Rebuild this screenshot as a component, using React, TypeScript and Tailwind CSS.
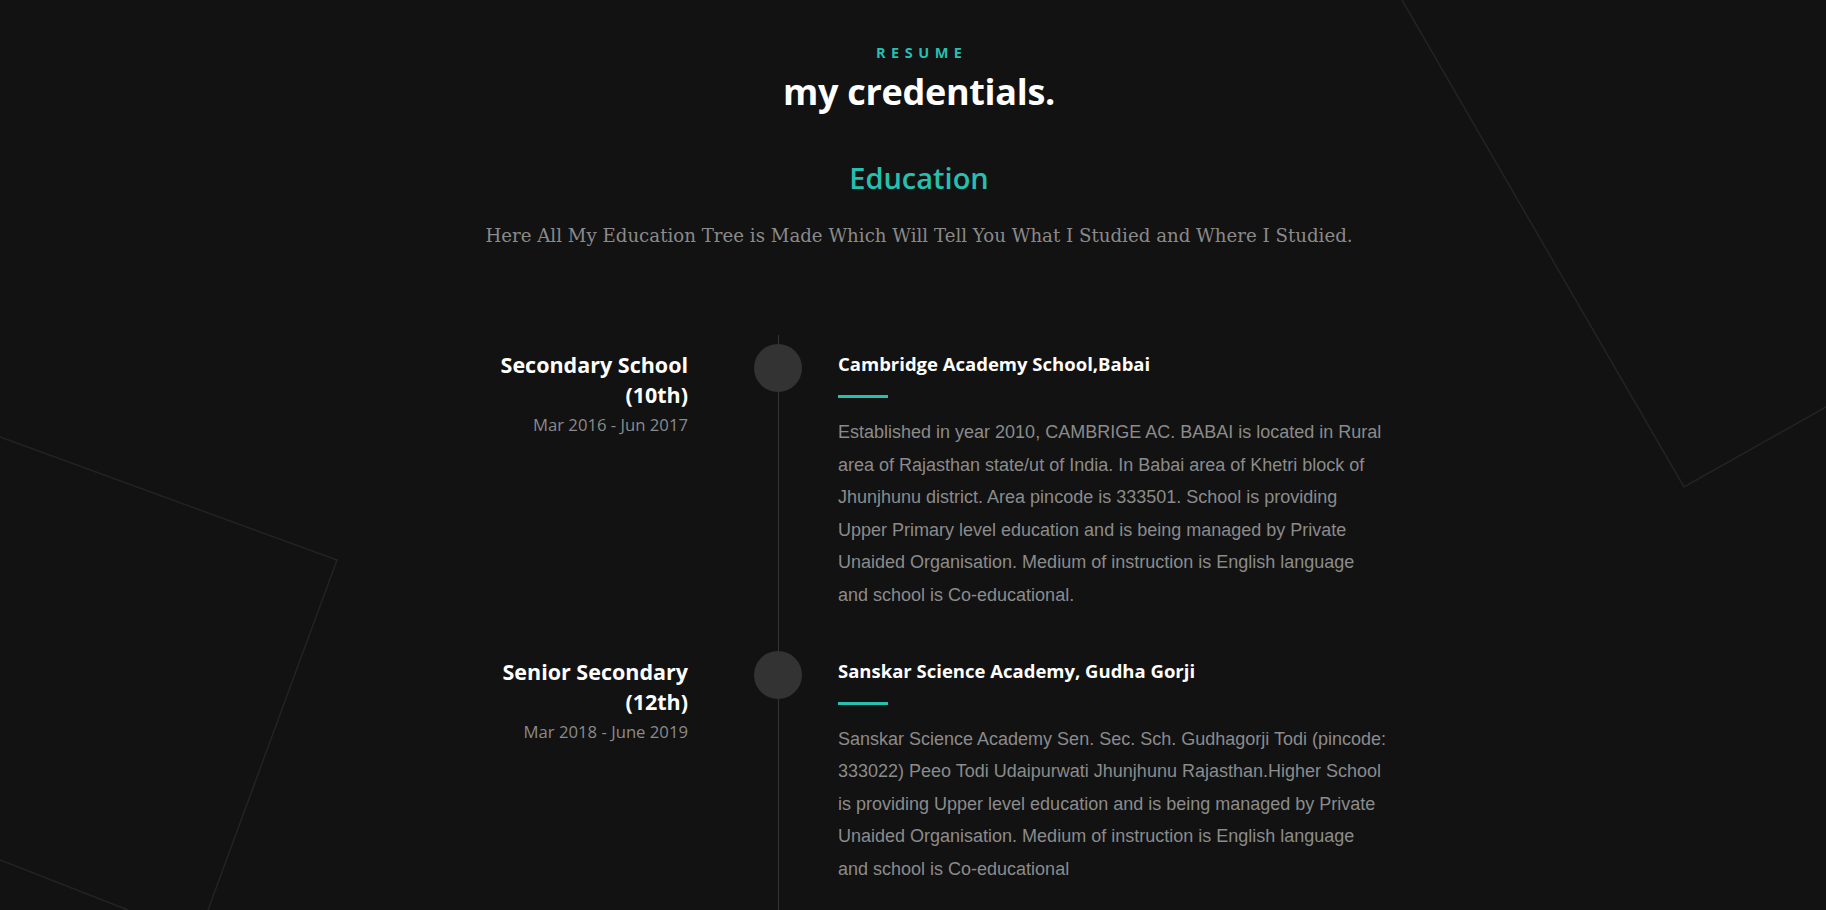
import React from "react";

const items = [
  {
    title: "Secondary School (10th)",
    date: "Mar 2016 - Jun 2017",
    school: "Cambridge Academy School,Babai",
    text:
      "Established in year 2010, CAMBRIGE AC. BABAI is located in Rural area of Rajasthan state/ut of India. In Babai area of Khetri block of Jhunjhunu district. Area pincode is 333501. School is providing Upper Primary level education and is being managed by Private Unaided Organisation. Medium of instruction is English language and school is Co-educational.",
  },
  {
    title: "Senior Secondary (12th)",
    date: "Mar 2018 - June 2019",
    school: "Sanskar Science Academy, Gudha Gorji",
    text:
      "Sanskar Science Academy Sen. Sec. Sch. Gudhagorji Todi (pincode: 333022) Peeo Todi Udaipurwati Jhunjhunu Rajasthan.Higher School is providing Upper level education and is being managed by Private Unaided Organisation. Medium of instruction is English language and school is Co-educational",
  },
];

const heading = { fontFamily: '"Open Sans", "Noto Sans", sans-serif' };

export default function App() {
  return (
    <div className="relative w-full h-[910px] overflow-hidden bg-[#121212]">
      <svg
        className="absolute inset-0 pointer-events-none"
        width="1826"
        height="910"
        viewBox="0 0 1826 910"
        fill="none"
      >
        <polyline points="1402,0 1684,487 1826,407" stroke="#232323" strokeWidth="1.5" />
        <polyline points="0,437 337,560 208,910" stroke="#232323" strokeWidth="1.5" />
        <polyline points="0,860 128,910" stroke="#232323" strokeWidth="1.5" />
      </svg>

      <div className="relative flex flex-col items-center pt-[42.5px]">
        <div className="flex flex-col items-center pl-[12px]">
          <p
            className="text-[14.5px] leading-[20px] font-bold tracking-[5.5px] pl-[5.5px] text-[#26bfb0]"
            style={heading}
          >
            RESUME
          </p>
          <h2
            className="mt-[6px] text-[36px] leading-[45px] font-bold text-white tracking-[-0.3px]"
            style={heading}
          >
            my credentials.
          </h2>
          <h3
            className="mt-[47px] text-[29px] leading-[1.2] font-semibold text-[#26bfb0]"
            style={heading}
          >
            Education
          </h3>
          <p
            className="mt-[27px] text-[18.2px] leading-[28px] text-[#8a8a8a]"
            style={{ fontFamily: '"DejaVu Serif", "Liberation Serif", serif' }}
          >
            Here All My Education Tree is Made Which Will Tell You What I Studied and Where I Studied.
          </p>
        </div>

        <div className="mt-[85px] w-[1050px] pl-[100px] flex flex-col">
          {items.map((it, i) => (
            <div key={i} className="flex">
              <div className="w-[200px] text-right pt-[15px]">
                <h4
                  className="text-[21.5px] leading-[30px] font-bold text-white"
                  style={heading}
                >
                  {it.title}
                </h4>
                <p
                  className="mt-[3px] text-[16.7px] leading-[24px] text-[#8a8a8a]"
                  style={heading}
                >
                  {it.date}
                </p>
              </div>
              <div className="w-[150px] shrink-0 bg-[linear-gradient(#333333,#333333)] bg-no-repeat bg-[length:1px_100%] bg-[position:89.5px_0]">
                <div className="mt-[9px] ml-[66px] w-[48px] h-[48px] rounded-full bg-[#333333]" />
              </div>
              <div className={"w-[548px] pt-[16px] " + (i === 0 ? "pb-[30.5px]" : "pb-[40px]")}>
                <h5
                  className="text-[18.5px] leading-[26px] font-bold text-white"
                  style={heading}
                >
                  {it.school}
                </h5>
                <div className="mt-[18px] w-[50px] h-[3px] bg-[#26bfb0]" />
                <p
                  className="mt-[18px] text-[18px] leading-[32.5px] text-[#8b8b8b]"
                  style={{ fontFamily: '"Liberation Sans", Arial, sans-serif' }}
                >
                  {it.text}
                </p>
              </div>
            </div>
          ))}
        </div>
      </div>
    </div>
  );
}
